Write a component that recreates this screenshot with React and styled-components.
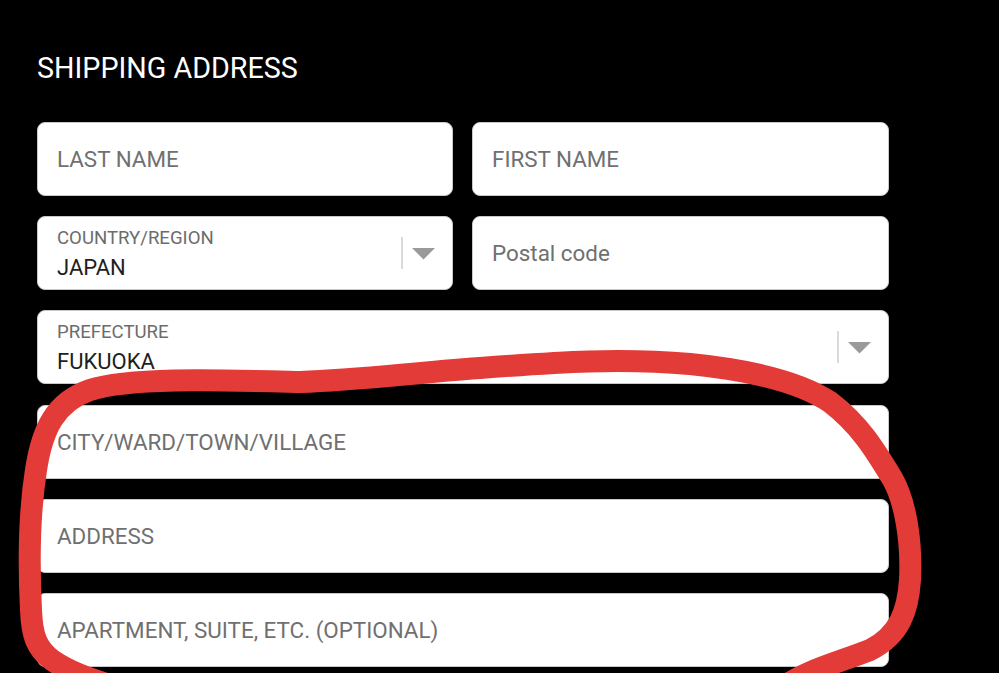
import React from "react";
import styled, { createGlobalStyle } from "styled-components";

const Global = createGlobalStyle`
  html, body { margin: 0; padding: 0; background: #000; }
  body { font-family: Roboto, "Noto Sans", "Liberation Sans", sans-serif; }
  * { box-sizing: border-box; }
`;

const Page = styled.div`
  position: relative;
  width: 999px;
  height: 673px;
  overflow: hidden;
  background: #000;
  padding: 52px 0 0 37px;
`;

const Title = styled.h2`
  margin: 0 0 37px;
  height: 33px;
  line-height: 33px;
  font-size: 28.7px;
  font-weight: 400;
  color: #fff;
  letter-spacing: 0;
`;

const Form = styled.div`
  display: grid;
  grid-template-columns: 416px 417px;
  grid-auto-rows: 74px;
  column-gap: 19px;
  row-gap: 20.2px;
`;

const Field = styled.div`
  grid-column: ${(p) => (p.$full ? "1 / span 2" : "auto")};
  background: #fff;
  border: 1px solid #c9c9c9;
  border-radius: 8px;
  display: flex;
  align-items: center;
  padding: 0 0 0 19px;
`;

const Placeholder = styled.span`
  font-size: 22.4px;
  color: #707070;
  flex: 1;
`;

const SelectBody = styled.div`
  flex: 1;
  display: flex;
  flex-direction: column;
  justify-content: center;
  padding-top: 3px;
`;

const Label = styled.span`
  font-size: 18.6px;
  color: #6c6c6c;
  line-height: 22px;
`;

const Value = styled.span`
  font-size: 22px;
  color: #1e1e1e;
  line-height: 30px;
  margin-top: 4px;
`;

const Divider = styled.span`
  width: 2px;
  height: 32px;
  background: #dadada;
  margin-right: 9px;
`;

const Caret = styled.svg`
  width: 23px;
  height: 12px;
  margin-right: 17px;
  margin-top: 2px;
  display: block;
`;

const Annotation = styled.svg`
  position: absolute;
  left: 0;
  top: 0;
  pointer-events: none;
`;

function Select({ label, value, full }) {
  return (
    <Field $full={full}>
      <SelectBody>
        <Label>{label}</Label>
        <Value>{value}</Value>
      </SelectBody>
      <Divider />
      <Caret viewBox="0 0 23 12">
        <path d="M0 0 L23 0 L11.5 11.5 Z" fill="#9a9a9a" />
      </Caret>
    </Field>
  );
}

function Input({ text, full }) {
  return (
    <Field $full={full}>
      <Placeholder>{text}</Placeholder>
    </Field>
  );
}

export default function App() {
  return (
    <>
      <Global />
      <Page>
        <Title>SHIPPING ADDRESS</Title>
        <Form>
          <Input text="LAST NAME" />
          <Input text="FIRST NAME" />
          <Select label="COUNTRY/REGION" value="JAPAN" />
          <Input text="Postal code" />
          <Select label="PREFECTURE" value="FUKUOKA" full />
          <Input text="CITY/WARD/TOWN/VILLAGE" full />
          <Input text="ADDRESS" full />
          <Input text="APARTMENT, SUITE, ETC. (OPTIONAL)" full />
        </Form>
        <Annotation width="999" height="673" viewBox="0 0 999 673">
          <path
            d="M300 382 C220 380 130 377 90 390 C55 402 42 430 36 470 C28 520 29 570 31 610 C32 635 36 648 52 660 C72 674 95 680 130 692
               M780 690 C800 672 840 662 870 650 C900 635 908 610 910 580 C912 540 905 500 892 478 C875 450 860 425 830 402 C800 382 750 370 690 364 C620 358 560 362 480 368 C400 374 360 380 300 382"
            fill="none"
            stroke="#e33b37"
            strokeWidth="22"
            strokeLinecap="round"
            strokeLinejoin="round"
          />
        </Annotation>
      </Page>
    </>
  );
}
